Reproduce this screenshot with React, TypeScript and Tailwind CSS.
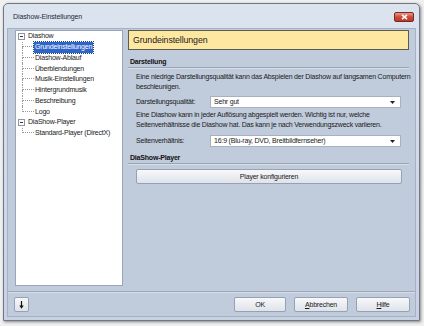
import React from "react";

const font = { fontFamily: '"Liberation Sans", Arial, sans-serif' };

function TreeChild({ label, last, selected }: { label: string; last?: boolean; selected?: boolean }) {
  return (
    <div className="flex h-[10.75px] items-stretch">
      <div className="flex w-[12px] flex-col">
        <div className="h-1/2 border-l border-b border-dotted border-[#9a9a9a]" />
        <div className={last ? "h-1/2" : "h-1/2 border-l border-dotted border-[#9a9a9a]"} />
      </div>
      <div
        className={
          selected
            ? "flex items-center bg-[#2f65c8] px-[1px] text-white outline outline-1 outline-dotted outline-[#1b3f86]"
            : "flex items-center px-[1px] text-[#1a1a1a]"
        }
      >
        {label}
      </div>
    </div>
  );
}

function TreeRoot({ label }: { label: string }) {
  return (
    <div className="flex h-[10.75px] items-center gap-[3px]">
      <div className="flex h-[7px] w-[7px] items-center justify-center border border-[#8d95a3] bg-white">
        <div className="h-[1px] w-[3px] bg-[#333]" />
      </div>
      <span className="text-[#1a1a1a]">{label}</span>
    </div>
  );
}

function Select({ value }: { value: string }) {
  return (
    <div className="flex h-[12px] w-[191px] items-center justify-between border border-[#a7b1c0] bg-white pl-[3px] pr-[5px] text-[#1a1a1a]">
      <span>{value}</span>
      <svg width="5" height="3" viewBox="0 0 5 3">
        <path d="M0 0h5L2.5 3z" fill="#222" />
      </svg>
    </div>
  );
}

function Btn({ children, className }: { children: React.ReactNode; className?: string }) {
  return (
    <div
      className={
        "flex h-[15px] items-center justify-center rounded-[2px] border border-[#96a1b1] bg-gradient-to-b from-[#f7f8fa] to-[#dfe3ea] text-[#1a1a1a] " +
        (className ?? "")
      }
    >
      {children}
    </div>
  );
}

function Section({ title, className }: { title: string; className: string }) {
  return (
    <div className={"flex flex-col justify-end " + className}>
      <div className="pl-[2px] font-bold text-[#111]">{title}</div>
      <div className="h-[1px] bg-[#9aa4b3]" />
      <div className="h-[1px] bg-[#d7dee8]" />
    </div>
  );
}

export default function App() {
  return (
    <div
      className="h-[326px] w-[424px] whitespace-nowrap bg-[#f0f0f0] pl-[3px] pr-[4px] pt-[3px] pb-[5px] text-[7px] leading-[10px] tracking-[-0.2px]"
      style={font}
    >
      <div className="flex h-full flex-col rounded-t-[5px] border border-[#6e7888] bg-gradient-to-b from-[#dbe4ef] to-[#c6d2e2] shadow-[1px_1px_3px_rgba(0,0,0,0.45)]">
        {/* Title bar */}
        <div className="flex h-[24px] items-center justify-between pl-[9px] pr-[5px] pt-[2px]">
          <span className="text-[7px] tracking-[-0.1px] text-[#1e2a3a]">Diashow-Einstellungen</span>
          <div className="flex h-[10px] w-[20px] items-center justify-center rounded-[2px] border border-[#7a2a22] bg-gradient-to-b from-[#e59a8e] via-[#cd4a3a] to-[#c0392b]">
            <svg width="7" height="6" viewBox="0 0 7 6">
              <path d="M1 0.8l5 4.4M6 0.8l-5 4.4" stroke="#fff" strokeWidth="1.6" />
            </svg>
          </div>
        </div>

        {/* Body */}
        <div className="mx-[3px] mb-[3px] flex flex-1 flex-col border border-[#a6b2c3] bg-[#c0cbdc]">
          <div className="flex flex-1 gap-[5px] pl-[7px] pr-[4px] pt-[1px]">
            {/* Tree */}
            <div className="h-[256px] w-[108px] border border-[#9aa5b5] bg-white pl-[2px]">
              <TreeRoot label="Diashow" />
              <div className="ml-[4px]">
                <TreeChild label="Grundeinstellungen" selected />
                <TreeChild label="Diashow-Ablauf" />
                <TreeChild label="Überblendungen" />
                <TreeChild label="Musik-Einstellungen" />
                <TreeChild label="Hintergrundmusik" />
                <TreeChild label="Beschreibung" />
                <TreeChild label="Logo" last />
              </div>
              <TreeRoot label="DiaShow-Player" />
              <div className="ml-[4px]">
                <TreeChild label="Standard-Player (DirectX)" last />
              </div>
            </div>

            {/* Right panel */}
            <div className="flex w-[281px] flex-col">
              <div className="flex h-[20px] items-center border border-[#5d5b4f] bg-[#fde7a1] pl-[4px] text-[8.8px] tracking-[-0.1px] text-[#1a1a1a]">
                Grundeinstellungen
              </div>
              <Section title="Darstellung" className="h-[19px]" />
              <div className="pl-[8px] pr-[4px] text-[#1a1a1a]">
                <p className="mt-[3px]">
                  Eine niedrige Darstellungsqualität kann das Abspielen der Diashow auf langsamen Computern
                  <br />
                  beschleunigen.
                </p>
                <div className="mt-[4px] flex items-center">
                  <span className="w-[74px]">Darstellungsqualität:</span>
                  <Select value="Sehr gut" />
                </div>
                <p className="mt-[2px]">
                  Eine Diashow kann in jeder Auflösung abgespielt werden. Wichtig ist nur, welche
                  <br />
                  Seitenverhältnisse die Diashow hat. Das kann je nach Verwendungszweck variieren.
                </p>
                <div className="mt-[5px] flex items-center">
                  <span className="w-[74px]">Seitenverhältnis:</span>
                  <Select value="16:9 (Blu-ray, DVD, Breitbildfernseher)" />
                </div>
              </div>
              <Section title="DiaShow-Player" className="h-[18px]" />
              <div className="pl-[8px] pr-[6px] pt-[4px]">
                <Btn className="h-[14px] w-[266px]">Player konfigurieren</Btn>
              </div>
            </div>
          </div>

          {/* Footer */}
          <div className="h-[1px] bg-[#9ba6b6]" />
          <div className="h-[1px] bg-[#d6dde7]" />
          <div className="flex h-[23px] items-center justify-between pl-[6px] pr-[5px]">
            <Btn className="w-[15px]">
              <svg width="5" height="8" viewBox="0 0 5 8">
                <path d="M2.5 0v6" stroke="#111" strokeWidth="1.2" />
                <path d="M0.3 4.5h4.4L2.5 7.8z" fill="#111" />
              </svg>
            </Btn>
            <div className="flex gap-[8px]">
              <Btn className="w-[52px]">OK</Btn>
              <Btn className="w-[54px]">
                <span><span className="underline">A</span>bbrechen</span>
              </Btn>
              <Btn className="w-[54px]">
                <span><span className="underline">H</span>ilfe</span>
              </Btn>
            </div>
          </div>
        </div>
      </div>
    </div>
  );
}
